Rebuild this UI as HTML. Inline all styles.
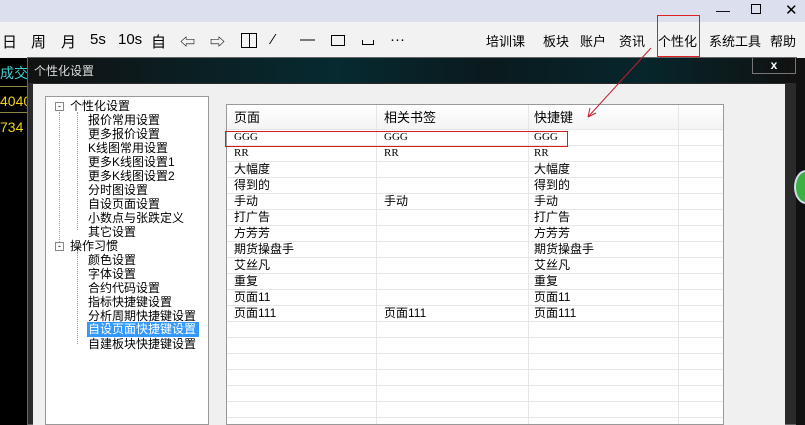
<!DOCTYPE html>
<html><head><meta charset="utf-8"><style>
*{margin:0;padding:0;box-sizing:border-box}
body{width:805px;height:425px;overflow:hidden;position:relative;background:#000;font-family:"Liberation Sans","Noto Sans CJK SC",sans-serif;font-size:12px;color:#000}
.a{position:absolute;white-space:nowrap}
#tb{left:0;top:0;width:805px;height:22px;background:#dcdfed}
#bar{left:0;top:22px;width:805px;height:36px;background:#f2f2f2;font-size:15px}
#bar span{position:absolute;top:9px}
#dlg{left:27px;top:57px;width:770px;height:368px;background:#2a2a2a;border:1px solid #666}
#dt{left:28px;top:58px;width:768px;height:25px;background:linear-gradient(90deg,#111 0%,#0b1e22 20%,#062a30 40%,#0a1a1e 60%,#06262c 80%,#111 100%)}
#body{left:33px;top:84px;width:752px;height:341px;background:#f0f0f0}
#tree{left:45px;top:96px;width:164px;height:329px;background:#fff;border:1px solid #999}
#tree div{position:absolute;font-size:12px;line-height:14px}
#tree .h{height:1px;width:8px;border-top:1px dotted #999}
#tbl{left:226px;top:104px;width:498px;height:321px;background:#fff;border:1px solid #999}
.row{position:absolute;left:0;width:496px;height:16px;border-bottom:1px solid #e6e6e6;font-size:12px;line-height:15px}
.row span{position:absolute}
.vl{position:absolute;top:0;bottom:0;width:1px;background:#e6e6e6}
.s{font-family:'Liberation Serif';font-size:11px}
</style></head><body>
<div class="a" id="tb"></div>
<div class="a" style="left:716px;top:2px;font-size:14px">—</div>
<div class="a" style="left:751px;top:4px;width:10px;height:10px;border:1.5px solid #000"></div>
<div class="a" style="left:785px;top:1px;font-size:15px">✕</div>
<div class="a" id="bar">
<span style="left:2px">日</span><span style="left:31px">周</span><span style="left:61px">月</span><span style="left:90px">5s</span><span style="left:118px">10s</span><span style="left:151px">自</span>
<span style="left:180px">⇦</span><span style="left:210px">⇨</span>
<span style="left:241px;top:11px;width:16px;height:15px;border:1.5px solid #000"></span><span style="left:249px;top:11px;width:1px;height:15px;background:#000"></span>
<span style="left:272px">⁄</span><span style="left:300px">—</span><span style="left:331px;top:13px;width:14px;height:11px;border:1.5px solid #000"></span>
<span style="left:362px;top:18px;width:12px;height:5px;border:1px solid #000;border-top:none"></span>
<span style="left:390px">···</span>
<span style="left:486px;font-size:13px">培训课</span><span style="left:543px;font-size:13px">板块</span><span style="left:580px;font-size:13px">账户</span><span style="left:619px;font-size:13px">资讯</span><span style="left:658px;font-size:13px">个性化</span><span style="left:709px;font-size:13px">系统工具</span><span style="left:770px;font-size:13px">帮助</span>
</div>
<div class="a" style="left:657px;top:15px;width:43px;height:42px;border:1px solid #e02020"></div>
<div class="a" style="left:0;top:63px;color:#3fd0d0;font-size:14px">成交</div>
<div class="a" style="left:0;top:93px;color:#f0d020;font-size:14px">4040</div>
<div class="a" style="left:0;top:119px;color:#f0d020;font-size:14px">734</div>
<div class="a" style="left:0;top:86px;width:27px;height:1px;background:#884"></div>
<div class="a" style="left:0;top:112px;width:27px;height:1px;background:#884"></div>
<div class="a" id="dlg"></div>
<div class="a" id="dt"></div>
<div class="a" style="left:34px;top:62px;color:#ddd;font-size:12px">个性化设置</div>
<div class="a" style="left:752px;top:58px;width:44px;height:16px;border:1px solid #777;border-top:none;color:#fff;font-weight:bold;text-align:center;font-size:12px;line-height:14px">x</div>
<div class="a" style="left:796px;top:58px;width:9px;height:367px;background:#111"></div>
<div class="a" style="left:794px;top:170px;width:24px;height:34px;border-radius:50%;background:#3cb043;border:2px solid #cde"></div>
<div class="a" id="body"></div>
<div class="a" id="tree">
<div style="left:9px;top:5px;width:9px;height:9px;border:1px solid #888;font-size:9px;line-height:7px;text-align:center">-</div>
<div style="left:24px;top:2px">个性化设置</div>
<div style="left:13px;top:15px;width:1px;height:130px;border-left:1px dotted #999"></div>
<div style="left:31px;top:15px;width:1px;height:118px;border-left:1px dotted #999"></div>
<div style="left:42px;top:16px">报价常用设置</div>
<div style="left:42px;top:30px">更多报价设置</div>
<div style="left:42px;top:44px">K线图常用设置</div>
<div style="left:42px;top:58px">更多K线图设置1</div>
<div style="left:42px;top:72px">更多K线图设置2</div>
<div style="left:42px;top:86px">分时图设置</div>
<div style="left:42px;top:100px">自设页面设置</div>
<div style="left:42px;top:114px">小数点与张跌定义</div>
<div style="left:42px;top:128px">其它设置</div>
<div style="left:9px;top:145px;width:9px;height:9px;border:1px solid #888;font-size:9px;line-height:7px;text-align:center">-</div>
<div style="left:24px;top:142px">操作习惯</div>
<div style="left:31px;top:155px;width:1px;height:92px;border-left:1px dotted #999"></div>
<div style="left:42px;top:156px">颜色设置</div>
<div style="left:42px;top:170px">字体设置</div>
<div style="left:42px;top:184px">合约代码设置</div>
<div style="left:42px;top:198px">指标快捷键设置</div>
<div style="left:42px;top:212px">分析周期快捷键设置</div>
<div style="left:41px;top:225px;width:112px;height:15px;background:#3399ff;color:#fff;padding-left:1px">自设页面快捷键设置</div>
<div style="left:42px;top:240px">自建板块快捷键设置</div>
</div>
<div class="a" id="tbl">
<div class="row" style="top:0;height:25px;background:linear-gradient(#fff,#f4f4f4);line-height:26px;font-size:13px"><span style="left:7px">页面</span><span style="left:157px">相关书签</span><span style="left:307px">快捷键</span></div>
<div class="vl" style="left:149px"></div><div class="vl" style="left:301px"></div><div class="vl" style="left:451px"></div>
<div class="row" style="top:25px"><span class="s" style="left:7px">GGG</span><span class="s" style="left:157px">GGG</span><span class="s" style="left:307px">GGG</span></div>
<div class="row" style="top:41px"><span class="s" style="left:7px">RR</span><span class="s" style="left:157px">RR</span><span class="s" style="left:307px">RR</span></div>
<div class="row" style="top:57px"><span style="left:7px">大幅度</span><span style="left:307px">大幅度</span></div>
<div class="row" style="top:73px"><span style="left:7px">得到的</span><span style="left:307px">得到的</span></div>
<div class="row" style="top:89px"><span style="left:7px">手动</span><span style="left:157px">手动</span><span style="left:307px">手动</span></div>
<div class="row" style="top:105px"><span style="left:7px">打广告</span><span style="left:307px">打广告</span></div>
<div class="row" style="top:121px"><span style="left:7px">方芳芳</span><span style="left:307px">方芳芳</span></div>
<div class="row" style="top:137px"><span style="left:7px">期货操盘手</span><span style="left:307px">期货操盘手</span></div>
<div class="row" style="top:153px"><span style="left:7px">艾丝凡</span><span style="left:307px">艾丝凡</span></div>
<div class="row" style="top:169px"><span style="left:7px">重复</span><span style="left:307px">重复</span></div>
<div class="row" style="top:185px"><span style="left:7px">页面11</span><span style="left:307px">页面11</span></div>
<div class="row" style="top:201px"><span style="left:7px">页面111</span><span style="left:157px">页面111</span><span style="left:307px">页面111</span></div>
<div class="row" style="top:217px"></div><div class="row" style="top:233px"></div><div class="row" style="top:249px"></div><div class="row" style="top:265px"></div><div class="row" style="top:281px"></div><div class="row" style="top:297px"></div>
</div>
<div class="a" style="left:225px;top:131px;width:343px;height:16px;border:1px solid #d02020"></div>
<svg class="a" style="left:0;top:0" width="805" height="425"><line x1="651" y1="48" x2="588" y2="117" stroke="#c02030" stroke-width="1"/><path d="M588 117 L590 108 M588 117 L596 113" stroke="#c02030" fill="none"/></svg>
</body></html>
